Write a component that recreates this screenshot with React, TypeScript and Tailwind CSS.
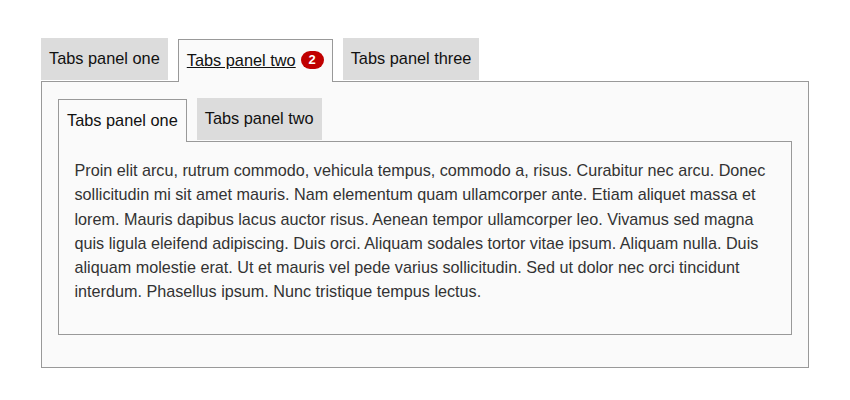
export default function App() {
  return (
    <div className="bg-white h-[400px] w-[850px] pt-[38px] px-[41px] font-['Liberation_Sans',Arial,sans-serif] text-[16.33px] text-[#111]">
      <div className="flex items-start gap-[10px] h-[44px]">
        <div className="h-[42px] px-[8px] pb-[2px] flex items-center bg-[#dcdcdc]">Tabs panel one</div>
        <div className="relative z-10 h-[43px] mt-px px-[8px] pb-[2px] flex items-center gap-[5px] bg-[#fafafa] border border-[#999] border-b-0">
          <span className="underline">Tabs panel two</span>
          <span className="w-[23px] h-[18px] rounded-full bg-[#c00000] text-white text-[13px] font-bold flex items-center justify-center">2</span>
        </div>
        <div className="h-[42px] px-[8px] pb-[2px] flex items-center bg-[#dcdcdc]">Tabs panel three</div>
      </div>
      <div className="h-[287px] -mt-[1px] border border-[#999] bg-[#fafafa] pt-[17px] px-[16px]">
        <div className="flex items-start gap-[10px] h-[43px]">
          <div className="relative z-10 h-[43px] px-[8px] pb-[2px] flex items-center bg-[#fafafa] border border-[#999] border-b-0">Tabs panel one</div>
          <div className="h-[42px] -mt-px px-[8px] pb-[2px] flex items-center bg-[#dcdcdc]">Tabs panel two</div>
        </div>
        <div className="h-[194px] -mt-px border border-[#999] pl-[15.5px] pr-[16px] pt-[16px] text-[16.2px] leading-[24.3px] text-[#333]">
          Proin elit arcu, rutrum commodo, vehicula tempus, commodo a, risus. Curabitur nec arcu. Donec sollicitudin mi sit amet mauris. Nam elementum quam ullamcorper ante. Etiam aliquet massa et lorem. Mauris dapibus lacus auctor risus. Aenean tempor ullamcorper leo. Vivamus sed magna quis ligula eleifend adipiscing. Duis orci. Aliquam sodales tortor vitae ipsum. Aliquam nulla. Duis aliquam molestie erat. Ut et mauris vel pede varius sollicitudin. Sed ut dolor nec orci tincidunt interdum. Phasellus ipsum. Nunc tristique tempus lectus.
        </div>
      </div>
    </div>
  );
}
